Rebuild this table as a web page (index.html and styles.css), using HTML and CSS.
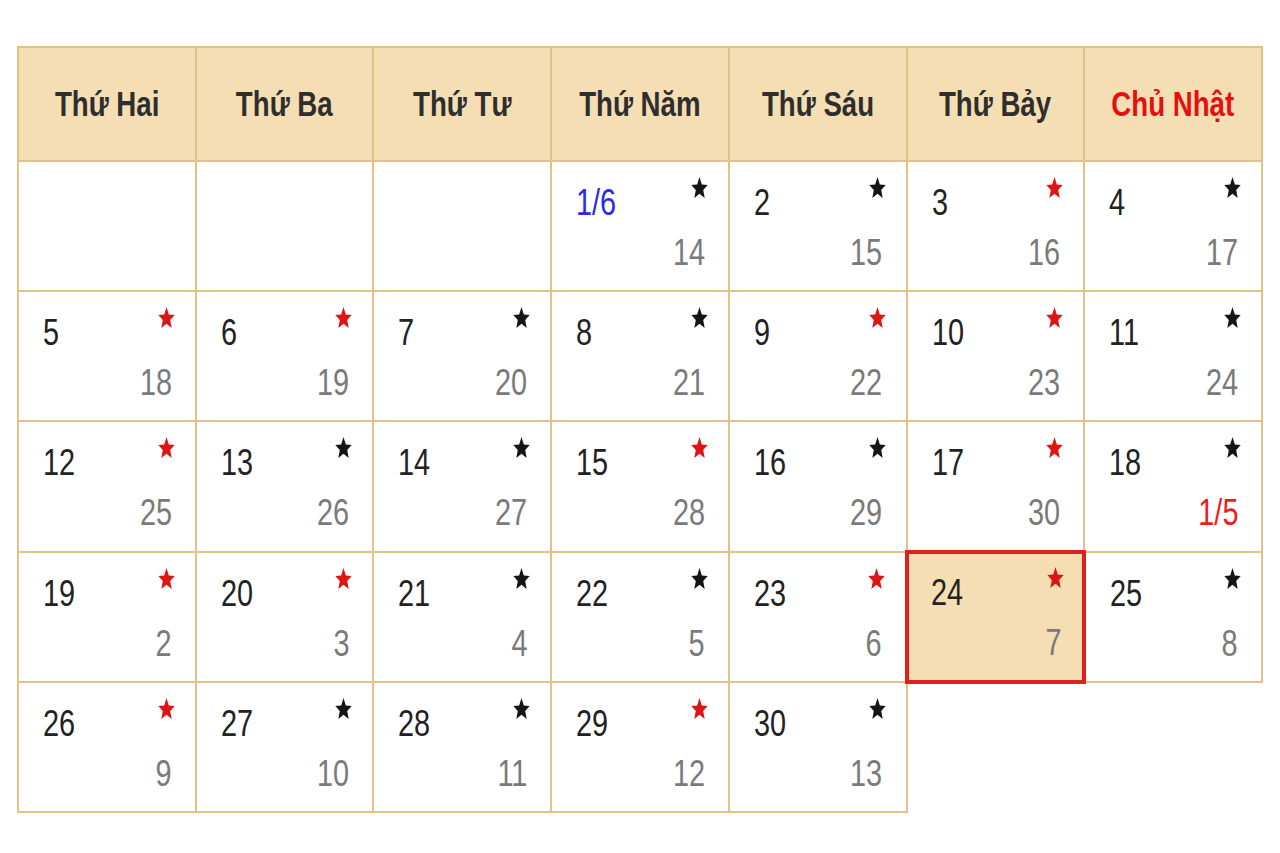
FILE: index.html
```html
<!DOCTYPE html>
<html lang="vi">
<head>
<meta charset="utf-8">
<title>Lịch tháng</title>
<link rel="stylesheet" href="styles.css">
</head>
<body>
<table class="cal">
  <thead>
    <tr>
      <th><span class="hd">Thứ Hai</span></th>
      <th><span class="hd">Thứ Ba</span></th>
      <th><span class="hd">Thứ Tư</span></th>
      <th><span class="hd">Thứ Năm</span></th>
      <th><span class="hd">Thứ Sáu</span></th>
      <th><span class="hd">Thứ Bảy</span></th>
      <th><span class="hd sun">Chủ Nhật</span></th>
    </tr>
  </thead>
  <tbody id="body"></tbody>
</table>
<script src="app.js"></script>
</body>
</html>
```
FILE: app.js
```js
const red = new Set([3,5,6,9,10,12,15,17,19,20,23,24,26,29]);
const star = (c) => `<svg class="star ${c}" viewBox="1 1.5 22 20.5" preserveAspectRatio="none"><path d="M12 1.5l3 7.3 7.6.5-5.8 5 1.9 7.6L12 17.8l-6.7 4.1 1.9-7.6-5.8-5 7.6-.5z"/></svg>`;
function lunar(d) {
  if (d <= 17) return { t: String(d + 13) };
  if (d === 18) return { t: '1/5', c: 'lred' };
  return { t: String(d - 17) };
}
const body = document.getElementById('body');
let html = '';
const cells = [null, null, null];
for (let d = 1; d <= 30; d++) cells.push(d);
for (let r = 0; r < 5; r++) {
  html += '<tr>';
  for (let c = 0; c < 7; c++) {
    const i = r * 7 + c;
    if (i >= cells.length) break;
    const d = cells[i];
    if (d === null) { html += '<td><div class="cell"></div></td>'; continue; }
    const l = lunar(d);
    const dayTxt = d === 1 ? '1/6' : String(d);
    const dayCls = d === 1 ? 'day blue' : 'day';
    const today = d === 24 ? ' class="today"' : '';
    html += `<td${today}><div class="cell"><div class="top"><span class="${dayCls}">${dayTxt}</span>${star(red.has(d) ? 'r' : 'b')}</div><div class="bot"><span class="lun ${l.c || ''}">${l.t}</span></div></div></td>`;
  }
  html += '</tr>';
}
body.innerHTML = html;
```
FILE: styles.css
```css
html, body {
  margin: 0;
  background: #fff;
}
body {
  padding: 46px 0 0 17px;
  font-family: "Liberation Sans", Arial, sans-serif;
}
.cal {
  border-collapse: collapse;
  table-layout: fixed;
  width: 1246px;
}
.cal th, .cal td {
  border: 2px solid #e3c288;
  padding: 0;
  vertical-align: top;
}
.cal th {
  background: #f5deb3;
  height: 112px;
  vertical-align: middle;
  text-align: center;
}
.hd {
  display: inline-block;
  font-size: 35px;
  font-weight: bold;
  color: #2e2e2e;
  transform: scaleX(0.79);
  white-space: nowrap;
}
.hd.sun {
  color: #e41010;
}
.cell {
  height: 128px;
  box-sizing: border-box;
  padding: 15px 20px 0 24px;
  display: flex;
  flex-direction: column;
}
.top {
  display: flex;
  justify-content: space-between;
  align-items: flex-start;
}
.day {
  display: inline-block;
  margin-top: 7px;
  font-size: 37px;
  line-height: 37px;
  color: #222;
  transform: scaleX(0.78);
  transform-origin: left center;
}
.day.blue {
  color: #2a2ae8;
}
.star {
  width: 17px;
  height: 21px;
}
.star.r { fill: #dd1515; }
.star.b { fill: #151515; }
.bot {
  display: flex;
  justify-content: flex-end;
  padding-right: 3px;
  margin-top: 13px;
}
.lun {
  display: inline-block;
  font-size: 37px;
  line-height: 37px;
  color: #7a7a7a;
  transform: scaleX(0.78);
  transform-origin: right center;
}
.lun.lred {
  color: #ee1c1c;
}
.cal td.today {
  background: #f5deb3;
  border: 4px solid #e02020;
}
.cal td.today .cell {
  height: 124px;
  padding: 13px 18px 0 22px;
}
```
